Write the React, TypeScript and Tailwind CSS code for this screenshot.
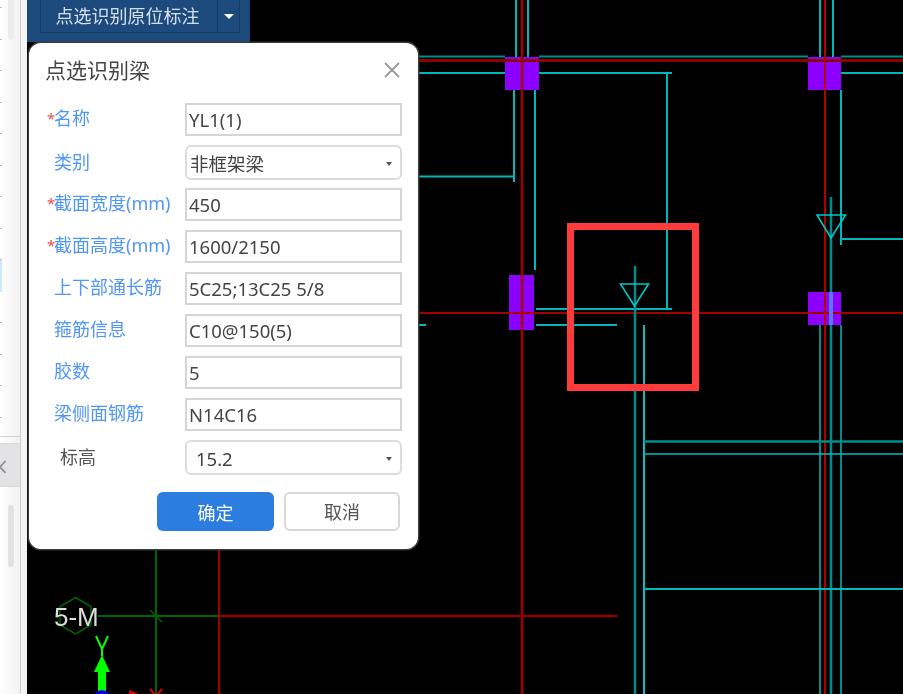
import React from 'react';

const cjk = { fontFamily: '"Noto Sans", "Noto Sans CJK SC", sans-serif' };

const TEAL = '#00b8b8';
const DIM = '#008c8c';
const RED = '#8f0000';

// x1, y1, x2, y2, colour, width
type Seg = [number, number, number, number, string, number];

const lines: Seg[] = [
  // axis lines
  [418, 60.5, 903, 60.5, RED, 3],
  [418, 313, 903, 313, '#a00000', 2],
  [522, 0, 522, 694, '#a00000', 2.5],
  [825, 0, 825, 694, '#b00000', 2],
  [219, 549, 219, 694, '#a00000', 2],
  [219, 616, 617, 616, RED, 2.5],
  // upper beams
  [418, 56.5, 505, 56.5, DIM, 2],
  [539, 56.5, 808, 56.5, DIM, 2],
  [841, 56.5, 903, 56.5, DIM, 2],
  [418, 73, 505, 73, TEAL, 2],
  [539, 73, 672, 73, TEAL, 2],
  [841, 73, 903, 73, TEAL, 2],
  [516, 0, 516, 57, TEAL, 2],
  [528, 0, 528, 57, TEAL, 2],
  [820, 0, 820, 57, TEAL, 2],
  [833, 0, 833, 57, TEAL, 2],
  // column legs and returns
  [514, 90, 514, 182, TEAL, 2],
  [418, 176.5, 514, 176.5, TEAL, 2],
  [535, 90, 535, 270, TEAL, 2],
  [667, 73, 667, 309, TEAL, 2],
  [536, 309, 672, 309, TEAL, 2],
  [536, 325, 617, 325, TEAL, 2],
  [418, 325, 426, 325, TEAL, 2],
  [841, 90, 841, 245, TEAL, 2],
  [841, 239, 903, 239, TEAL, 2],
  // lower verticals
  [635, 266, 635, 694, DIM, 2.5],
  [644, 325, 644, 694, '#00c0c0', 2],
  [831, 197, 831, 292, DIM, 2.5],
  [831, 292, 831, 325, '#5a78ff', 4],
  [831, 325, 831, 694, DIM, 2.5],
  [820, 325, 820, 694, DIM, 2],
  [841, 325, 841, 694, DIM, 2],
  // lower beams
  [644, 441.5, 903, 441.5, DIM, 2.5],
  [644, 454, 903, 454, '#00c0c0', 1.5],
  [644, 589, 903, 589, TEAL, 2],
  // green grid
  [156, 549, 156, 694, '#006400', 2],
  [98, 616, 219, 616, '#006400', 2],
  [150, 610, 162, 622, '#006400', 1.5],
];

const columns = [
  [505, 57, 34, 33],
  [808, 57, 33, 33],
  [509, 275, 25, 55],
  [808, 292, 33, 33],
];

function CadDrawing() {
  return (
    <svg className="block" width="876" height="694" viewBox="27 0 876 694">
      {columns.map(([x, y, w, h]) => (
        <rect key={`${x}-${y}`} x={x} y={y} width={w} height={h} fill="#8b00ff" />
      ))}
      {lines.map(([x1, y1, x2, y2, color, width], i) => (
        <line key={i} x1={x1} y1={y1} x2={x2} y2={y2} stroke={color} strokeWidth={width} />
      ))}
      <polygon points="620.5,284 648.5,284 634.5,306" fill="none" stroke="#00c8c8" strokeWidth="1.6" />
      <polygon points="817,215 845.5,215 831,238" fill="none" stroke="#00c8c8" strokeWidth="1.6" />
      <polygon points="75.5,597.5 91,606.5 91,625 75.5,634 60,625 60,606.5" fill="none" stroke="#006400" strokeWidth="1.5" />
      <text x="54" y="626" fill="#dedede" fontSize="26" fontFamily="Liberation Sans, sans-serif">5-M</text>
      {/* axis marker */}
      <path d="M96 636 L102 649 L108 636 M102 649 V656" fill="none" stroke="#00ff00" strokeWidth="2" />
      <polygon points="102,655 110,672 94,672" fill="#00ff00" />
      <rect x="98" y="672" width="8" height="19" fill="#00ff00" />
      <circle cx="102" cy="699" r="9" fill="#0000d0" />
      <polygon points="129,690 139,694 129,694" fill="#e00000" />
      <path d="M150 689 L156 696 L162 689" fill="none" stroke="#e00000" strokeWidth="2" />
    </svg>
  );
}

function Sidebar() {
  const rows = Array.from({ length: 14 }, (_, i) => i);
  return (
    <div className="flex h-full w-[27px] shrink-0 bg-[#f4f4f4]">
      <div className="flex h-full w-[21px] flex-col border-r border-[#cfcfcf] bg-gradient-to-r from-white to-[#f1f1f1]">
        <div className="relative h-[437px] overflow-hidden border-b border-[#cfcfcf]">
          <div className="mt-[-23.5px] flex flex-col">
            {rows.map(i => (
              <div key={i} className="flex h-[31.5px] items-end">
                {i === 9 ? (
                  <span className="h-full w-[2px] bg-[#cfe6ff]" />
                ) : (
                  <span className="h-px w-[2px] bg-[#bdbdbd]" />
                )}
              </div>
            ))}
          </div>
          <div className="absolute left-[8px] top-0 h-[40px] w-[6px] rounded-b bg-[#ececec]" />
        </div>
        <div className="mt-[6px] flex h-[44px] shrink-0 items-center border-y border-[#d8d8d8] bg-[#e3e3e5] pt-[4px]">
          <svg width="6" height="14" viewBox="0 0 6 14">
            <path d="M5.5 1 L0 7 L5.5 13" stroke="#8a8a8a" strokeWidth="1.6" fill="none" />
          </svg>
        </div>
        <div className="flex-1 pl-[8px] pt-[18px]">
          <div className="h-[62px] w-[6px] rounded bg-[#e2e2e2]" />
        </div>
      </div>
    </div>
  );
}

function Caret({ className }: { className: string }) {
  return <span className={`border-x-transparent ${className}`} />;
}

interface FieldRow {
  label: string;
  value: string;
  required?: boolean;
  select?: boolean;
  plain?: boolean;
  rowClass?: string;
}

const fields: FieldRow[] = [
  { label: '名称', value: 'YL1(1)', required: true },
  { label: '类别', value: '非框架梁', select: true, rowClass: 'h-[43px]' },
  { label: '截面宽度(mm)', value: '450', required: true },
  { label: '截面高度(mm)', value: '1600/2150', required: true },
  { label: '上下部通长筋', value: '5C25;13C25 5/8' },
  { label: '箍筋信息', value: 'C10@150(5)' },
  { label: '胶数', value: '5' },
  { label: '梁侧面钢筋', value: 'N14C16' },
  { label: '标高', value: '15.2', select: true, plain: true },
];

function Field({ field }: { field: FieldRow }) {
  return (
    <div className={`flex items-start ${field.rowClass ?? 'h-[42px]'}`}>
      <div
        className={`flex w-[138px] shrink-0 items-center text-[18px] whitespace-nowrap ${
          field.select ? 'h-[34px]' : 'h-[31px]'
        }`}
      >
        <span className="w-[7px] text-[15px] text-[#f04848]">{field.required ? '*' : ''}</span>
        {field.plain ? (
          <span className="ml-[6px] text-[#555555]">{field.label}</span>
        ) : (
          <span className="text-[#4f96f6]">{field.label}</span>
        )}
      </div>
      {field.select ? (
        <div className="flex h-[35px] w-[217px] items-center justify-between rounded-[6px] border-2 border-[#dcdcdc] pr-[8px] pt-[2px] text-[18.5px] text-[#444444]">
          <span className={field.plain ? 'pl-[9px]' : 'pl-[3px]'}>{field.value}</span>
          <Caret className="border-x-[3px] border-t-[4px] border-t-[#555555]" />
        </div>
      ) : (
        <div className="flex h-[33px] w-[217px] items-center border-2 border-[#d5d5d8] pl-[2px] pt-[1px] text-[18.5px] text-[#444444]">
          {field.value}
        </div>
      )}
    </div>
  );
}

function BeamDialog() {
  return (
    <div
      className="absolute left-[2px] top-[43px] h-[506px] w-[389px] rounded-[12px] bg-white pl-[18px] pr-[16px] shadow-[0_0_0_1.5px_#3a3a3a]"
      style={cjk}
    >
      <div className="mb-[4px] ml-[-2px] flex h-[56px] items-center justify-between">
        <span className="text-[21px] text-[#444444]">点选识别梁</span>
        <svg width="18" height="18" viewBox="0 0 18 18" className="mb-[2px] mr-[1px]">
          <path d="M2 2 L16 16 M16 2 L2 16" stroke="#999999" strokeWidth="1.8" fill="none" />
        </svg>
      </div>
      {fields.map(f => (
        <Field key={f.label} field={f} />
      ))}
      <div className="mt-[10px] flex justify-end gap-[10px] pr-[2px]">
        <button className="h-[39px] w-[117px] rounded-[6px] bg-[#2b7de0] pt-[3px] text-[18px] text-white">确定</button>
        <button className="h-[39px] w-[116px] rounded-[6px] border-2 border-[#d8d8d8] bg-white pt-[1px] text-[18px] text-[#555555]">
          取消
        </button>
      </div>
    </div>
  );
}

function Toolbar() {
  return (
    <div className="absolute left-0 top-0 h-[42px] w-[223px] bg-[#1c4a7c] pl-[13px]" style={cjk}>
      <div className="flex h-[33px] w-[200px] items-center border border-t-0 border-[#123a66] text-[18px] text-[#d5e0ec]">
        <span className="w-[176px] whitespace-nowrap pr-[3px] text-center">点选识别原位标注</span>
        <span className="flex h-full flex-1 items-center justify-center border-l border-[#123a66]">
          <Caret className="border-x-[5px] border-t-[5px] border-t-white" />
        </span>
      </div>
    </div>
  );
}

export default function App() {
  return (
    <div className="flex h-[694px] w-[903px] overflow-hidden bg-black blur-[0.4px]">
      <Sidebar />
      <div className="relative flex-1">
        <CadDrawing />
        <Toolbar />
        <BeamDialog />
        {/* red callout around the section mark */}
        <div className="absolute left-[540px] top-[223px] h-[168px] w-[132px] border-[7px] border-[#ff3b3b]" />
      </div>
    </div>
  );
}
